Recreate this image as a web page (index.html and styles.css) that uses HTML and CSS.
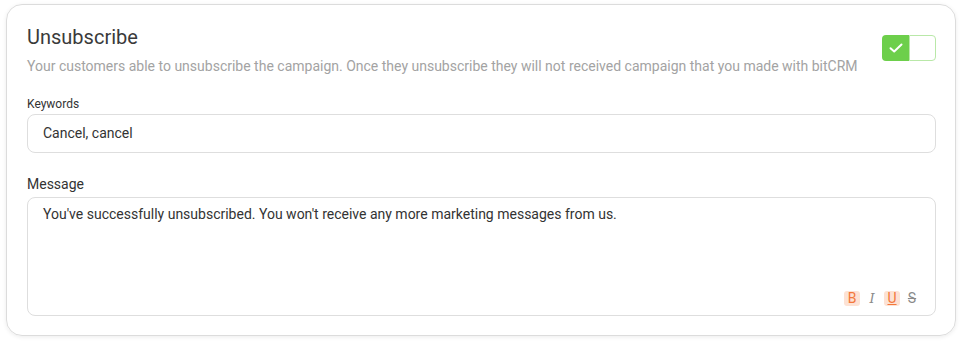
FILE: index.html
```html
<!DOCTYPE html>
<html>
  <head>
    <meta charset="UTF-8">
    <meta name=viewport content="width=device-width, initial-scale=1">
    <link rel="stylesheet" href="styles.css">
  </head>
  <body>
    <div id="page">
      <div class="card">
        <div class="card-header">
          <div class="card-heading">
            <div class="card-title">Unsubscribe</div>
            <div class="card-desc">Your customers able to unsubscribe the campaign. Once they unsubscribe they will not received campaign that you made with bitCRM</div>
          </div>
          <div class="toggle on">
            <div class="toggle-track">
              <svg width="14" height="10" viewBox="0 0 14 10"><path d="M1.5 5.2 L5.2 8.5 L12.5 1.5" fill="none" stroke="#fff" stroke-width="2" stroke-linecap="round" stroke-linejoin="round"/></svg>
            </div>
            <div class="toggle-knob"></div>
          </div>
        </div>

        <div class="field">
          <div class="field-label small">Keywords</div>
          <div class="input">Cancel, cancel</div>
        </div>

        <div class="field">
          <div class="field-label">Message</div>
          <div class="textarea">
            <div class="textarea-text">You've successfully unsubscribed. You won't receive any more marketing messages from us.</div>
            <div class="format-bar">
              <span class="fmt active bold">B</span>
              <span class="fmt italic">I</span>
              <span class="fmt active underline">U</span>
              <span class="fmt strike">S</span>
            </div>
          </div>
        </div>
      </div>
    </div>
  </body>
</html>
```

FILE: styles.css
```css
body {
  margin: 0;
  background-color: #fff;
  font-family: Roboto, "Liberation Sans", sans-serif;
  color: #333;
}

#page {
  padding: 4px 6px 9px 6px;
}

.card {
  border: 1px solid #dcdcdc;
  border-radius: 16px;
  box-shadow: 0 1px 4px rgba(0, 0, 0, 0.08);
  padding: 20px 19px 19px 20px;
}

.card-header {
  display: flex;
  align-items: center;
  justify-content: space-between;
}

.card-title {
  font-size: 20px;
  line-height: 24px;
  color: #3a3a3a;
}

.card-desc {
  margin-top: 8px;
  font-size: 14px;
  line-height: 18px;
  color: #a3a3a3;
}

.toggle {
  display: flex;
  width: 54px;
  height: 26px;
  margin-top: -5px;
}

.toggle-track {
  width: 27px;
  background-color: #6dcf4b;
  border-radius: 4px 0 0 4px;
  display: flex;
  align-items: center;
  justify-content: center;
}

.toggle-knob {
  flex: 1;
  background-color: #fff;
  border: 1px solid #b9e8a8;
  border-radius: 0 4px 4px 0;
}

.field {
  margin-top: 21px;
}

.field + .field {
  margin-top: 21px;
}

.field-label {
  font-size: 14px;
  line-height: 20px;
  color: #333;
  margin-bottom: 3px;
}

.field-label.small {
  font-size: 12px;
  line-height: 16px;
  margin-bottom: 2px;
}

.input {
  border: 1px solid #dedede;
  border-radius: 8px;
  height: 37px;
  padding: 0 15px;
  font-size: 14px;
  line-height: 37px;
  color: #333;
}

.textarea {
  border: 1px solid #dedede;
  border-radius: 8px;
  height: 119px;
  padding: 6px 15px 0 15px;
  box-sizing: border-box;
  display: flex;
  flex-direction: column;
}

.textarea-text {
  font-size: 14px;
  line-height: 20px;
  color: #333;
  flex: 1;
}

.format-bar {
  display: flex;
  justify-content: flex-end;
  gap: 4px;
  margin-bottom: 9px;
}

.fmt {
  width: 16px;
  height: 15px;
  line-height: 15px;
  text-align: center;
  font-size: 14px;
  color: #8a8a8a;
  border-radius: 3px;
}

.fmt.active {
  background-color: #fde2d4;
  color: #f3773a;
}

.fmt.italic {
  font-family: "DejaVu Serif", serif;
  font-style: italic;
  font-size: 13px;
}

.fmt.underline {
  text-decoration: underline;
}

.fmt.strike {
  text-decoration: line-through;
}
```
